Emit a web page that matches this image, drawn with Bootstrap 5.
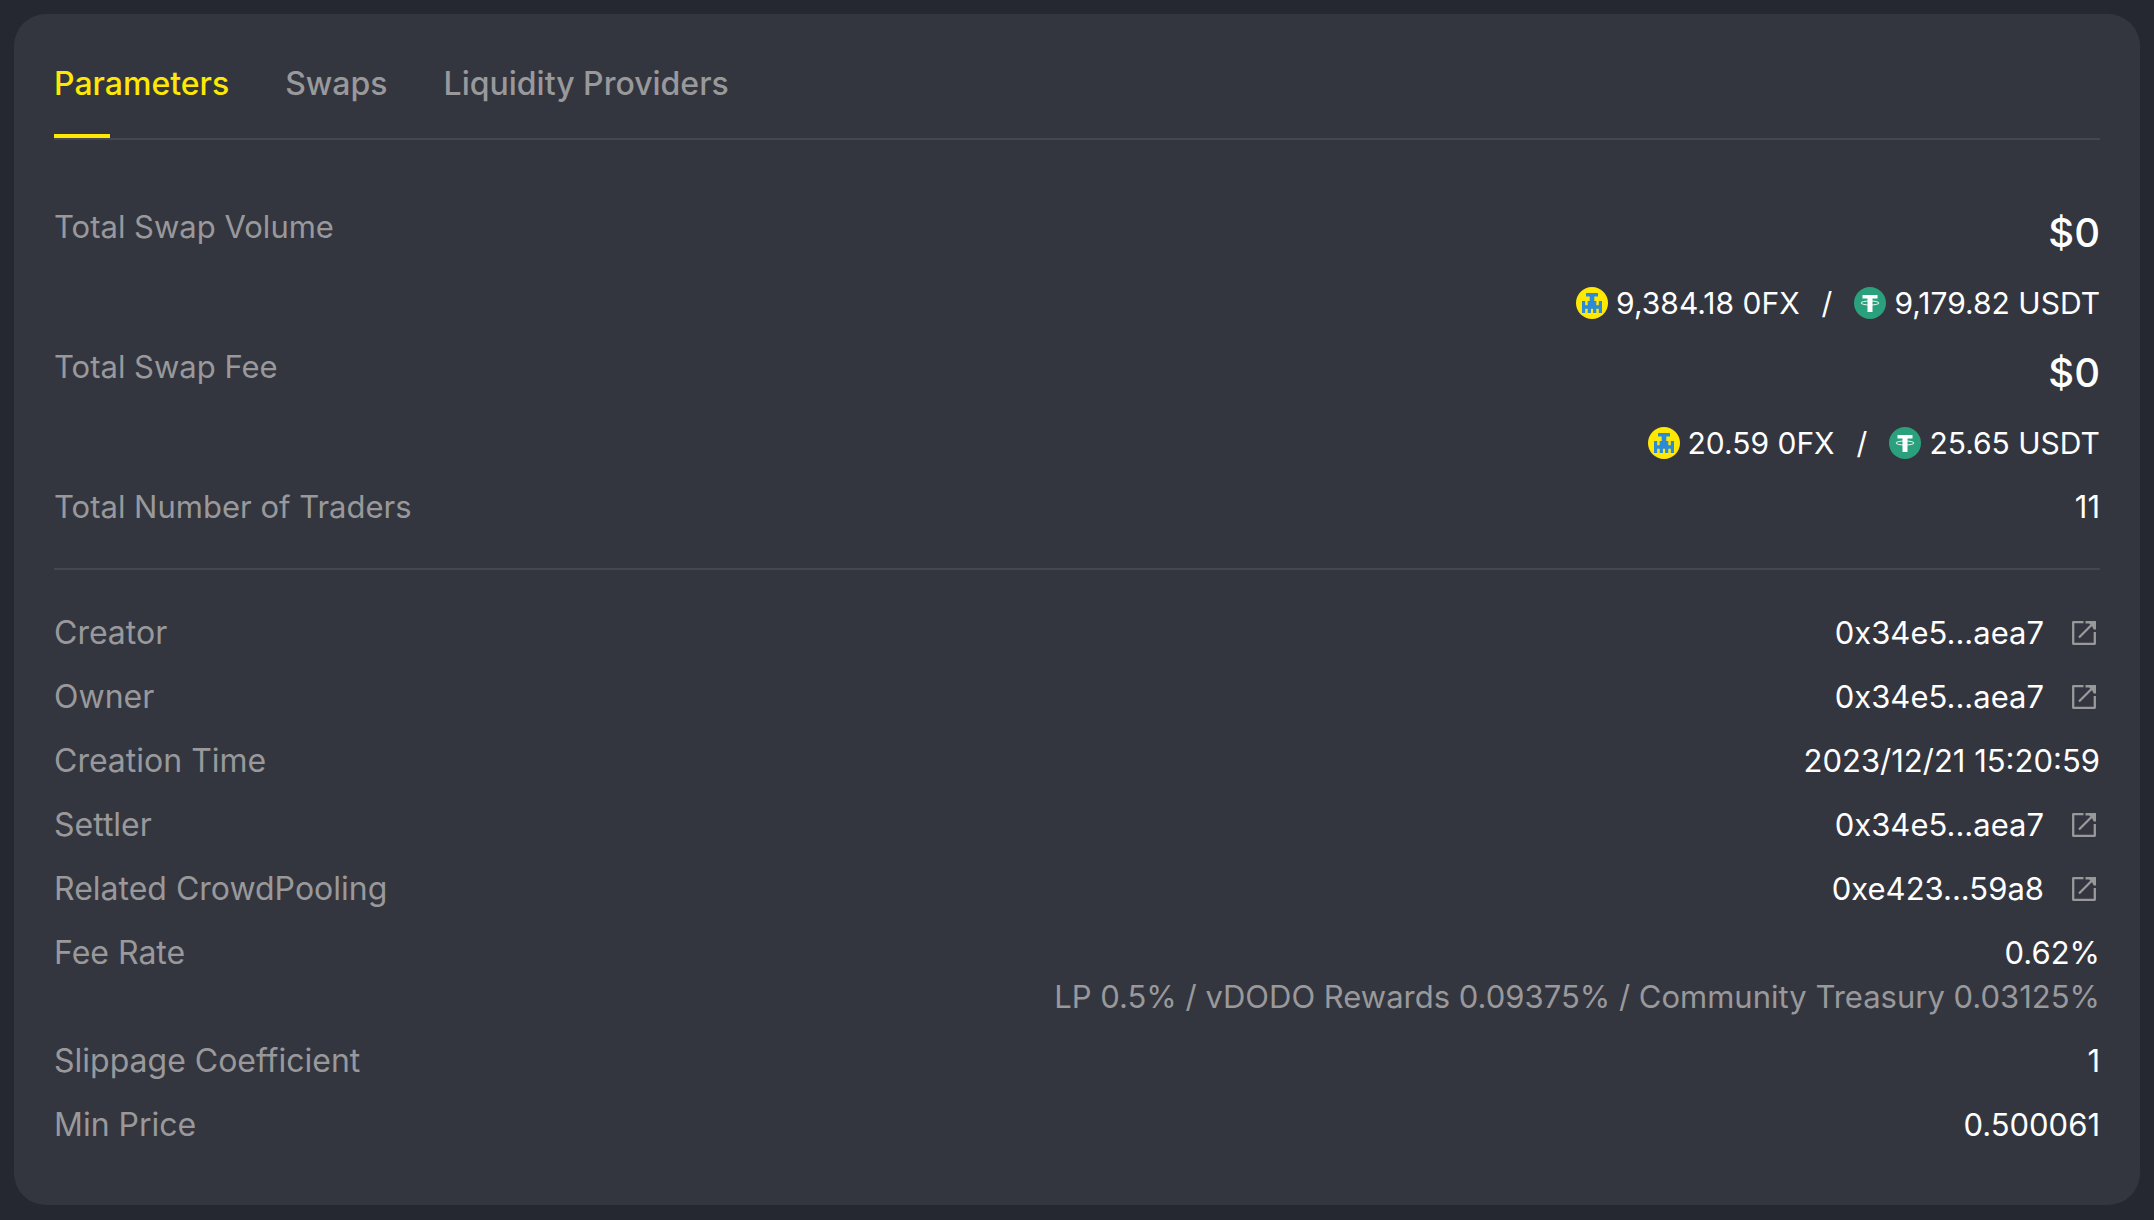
<!DOCTYPE html>
<html lang="en">
<head>
<meta charset="utf-8">
<meta name="viewport" content="width=device-width, initial-scale=1">
<title>Pool parameters</title>
<link rel="stylesheet" href="https://cdn.jsdelivr.net/npm/bootstrap@5.3.0/dist/css/bootstrap.min.css">
<style>
  body { background: #252831; color: #fff; font: 400 31px/44px Inter, "Liberation Sans", sans-serif; padding: 14px; }
  .pool-panel { background: #34363f; border-radius: 32px; padding: 48px 40px 58px; }
  .pool-tabs { border-bottom: 2px solid #44474f; gap: 56px; }
  .pool-tab { position: relative; background: none; border: 0; padding: 0 0 32px; color: #99999c; font-size: 32px; font-weight: 500; }
  .pool-tab.active { color: #ffe804; }
  .pool-tab.active::after { content: ""; position: absolute; left: 0; bottom: 0; width: 56px; height: 4px; background: #ffe804; }
  .pool-stats { display: flex; flex-direction: column; gap: 20px; margin: 0; }
  .pool-stats.first { padding: 65px 0 39px; border-bottom: 2px solid #44474f; }
  .pool-stats.second { padding-top: 41px; }
  .pool-stats dt { font-weight: 400; color: #99999c; }
  .pool-stats.second dt { font-size: 32px; }
  .pool-stats dd { margin: 0; }
  .total { font-size: 40px; line-height: 56px; font-weight: 500; margin-bottom: 20px; }
  .amounts { font-size: 30px; }
  .amounts svg { margin-right: 8px; }
  .slash { margin: 0 22px; }
  .split { color: #99999c; }
  .scan { margin: 0 4px 0 28px; color: #99999c; line-height: 0; }
</style>
<script src="https://cdn.jsdelivr.net/npm/bootstrap@5.3.0/dist/js/bootstrap.bundle.min.js"></script>
</head>
<body>
<svg class="d-none" aria-hidden="true">
  <symbol id="ofx" viewBox="0 0 32 32">
    <circle cx="16" cy="16" r="16" fill="#ffe804"/>
    <path fill="#2b8bd8" d="M10 6h12v3.600h-3.700V14h2v4.300h2.500V14H26v12h-3.200v-4.200h-2.500V26h-3.200v-4.200h-2.200V26h-3.200v-4.200H9.200V26H6V14h3.200v4.300h2.500V14h2V9.600H10z"/>
  </symbol>
  <symbol id="usdt" viewBox="0 0 32 32">
    <circle cx="16" cy="16" r="16" fill="#2aa17c"/>
    <path fill="#fff" d="M8.500 8h15v3.500h-5V25h-5V11.500h-5z"/>
    <ellipse cx="16" cy="16" rx="9" ry="2" fill="none" stroke="#fff" stroke-width=".9"/>
  </symbol>
  <symbol id="out" viewBox="0 0 24 24">
    <path fill="none" stroke="currentColor" stroke-width="2.300" stroke-linejoin="round" d="M11.500 1.200H1.200v21.600h21.600V11"/>
    <path fill="none" stroke="currentColor" stroke-width="2.300" d="M7 16.500L21 2.500"/>
    <path fill="currentColor" d="M13.500 0H24v8.500h-2.300L20 5l-3-2.500h-3.500z"/>
  </symbol>
</svg>
<main class="pool-panel">
  <div class="pool-tabs d-flex" role="tablist">
    <button class="pool-tab active" type="button" role="tab" aria-selected="true">Parameters</button>
    <button class="pool-tab" type="button" role="tab" aria-selected="false">Swaps</button>
    <button class="pool-tab" type="button" role="tab" aria-selected="false">Liquidity Providers</button>
  </div>
  <dl class="pool-stats first">
    <div class="d-flex justify-content-between">
      <dt>Total Swap Volume</dt>
      <dd class="text-end">
        <div class="total">$0</div>
        <div class="amounts d-flex align-items-center justify-content-end"><svg width="32" height="32"><use href="#ofx"/></svg><span>9,384.18 0FX</span><span class="slash">/</span><svg width="32" height="32"><use href="#usdt"/></svg><span>9,179.82 USDT</span></div>
      </dd>
    </div>
    <div class="d-flex justify-content-between">
      <dt>Total Swap Fee</dt>
      <dd class="text-end">
        <div class="total">$0</div>
        <div class="amounts d-flex align-items-center justify-content-end"><svg width="32" height="32"><use href="#ofx"/></svg><span>20.59 0FX</span><span class="slash">/</span><svg width="32" height="32"><use href="#usdt"/></svg><span>25.65 USDT</span></div>
      </dd>
    </div>
    <div class="d-flex justify-content-between"><dt>Total Number of Traders</dt><dd>11</dd></div>
  </dl>
  <dl class="pool-stats second">
    <div class="d-flex justify-content-between"><dt>Creator</dt><dd class="d-flex align-items-center">0x34e5...aea7<a class="scan" href="#" aria-label="Open creator"><svg width="24" height="24"><use href="#out"/></svg></a></dd></div>
    <div class="d-flex justify-content-between"><dt>Owner</dt><dd class="d-flex align-items-center">0x34e5...aea7<a class="scan" href="#" aria-label="Open owner"><svg width="24" height="24"><use href="#out"/></svg></a></dd></div>
    <div class="d-flex justify-content-between"><dt>Creation Time</dt><dd>2023/12/21 15:20:59</dd></div>
    <div class="d-flex justify-content-between"><dt>Settler</dt><dd class="d-flex align-items-center">0x34e5...aea7<a class="scan" href="#" aria-label="Open settler"><svg width="24" height="24"><use href="#out"/></svg></a></dd></div>
    <div class="d-flex justify-content-between"><dt>Related CrowdPooling</dt><dd class="d-flex align-items-center">0xe423...59a8<a class="scan" href="#" aria-label="Open CrowdPooling"><svg width="24" height="24"><use href="#out"/></svg></a></dd></div>
    <div class="d-flex justify-content-between"><dt>Fee Rate</dt><dd class="text-end">0.62%<div class="split">LP 0.5% / vDODO Rewards 0.09375% / Community Treasury 0.03125%</div></dd></div>
    <div class="d-flex justify-content-between"><dt>Slippage Coefficient</dt><dd>1</dd></div>
    <div class="d-flex justify-content-between"><dt>Min Price</dt><dd>0.500061</dd></div>
  </dl>
</main>
</body>
</html>
